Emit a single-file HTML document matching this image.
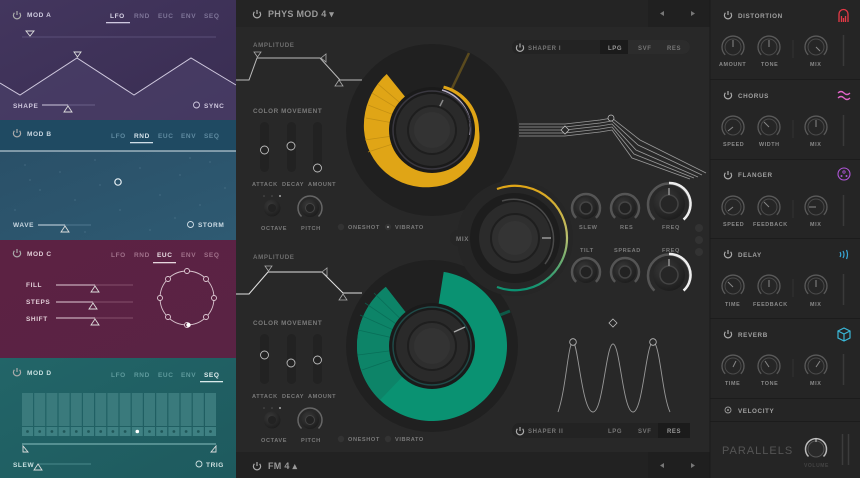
<!DOCTYPE html>
<html><head><meta charset="utf-8"><style>
html,body{margin:0;padding:0;background:#262626;width:860px;height:478px;overflow:hidden}
svg{display:block}
text{font-family:"Liberation Sans",sans-serif;font-weight:bold;letter-spacing:.6px}
</style></head><body>
<svg width="860" height="478" viewBox="0 0 860 478" xmlns="http://www.w3.org/2000/svg">
<defs>
<linearGradient id="ga" x1="0" y1="0" x2="1" y2="1"><stop offset="0" stop-color="#43365e"/><stop offset="1" stop-color="#392d52"/></linearGradient>
<linearGradient id="gb" x1="0" y1="0" x2="1" y2="1"><stop offset="0" stop-color="#2a5068"/><stop offset="1" stop-color="#2e5a72"/></linearGradient>
<linearGradient id="gc" x1="0" y1="0" x2="1" y2="1"><stop offset="0" stop-color="#5c2243"/><stop offset="1" stop-color="#5a2344"/></linearGradient>
<linearGradient id="gd" x1="0" y1="0" x2="1" y2="1"><stop offset="0" stop-color="#226568"/><stop offset="1" stop-color="#1e5a5e"/></linearGradient>
<linearGradient id="mixg" x1="0" y1="0" x2="0" y2="1"><stop offset="0" stop-color="#e0a516"/><stop offset=".5" stop-color="#b8c070"/><stop offset="1" stop-color="#0a9272"/></linearGradient>
<radialGradient id="kn" cx=".4" cy=".35" r=".7"><stop offset="0" stop-color="#3a3a3a"/><stop offset="1" stop-color="#1c1c1c"/></radialGradient>
<g id="fk"><path d="M-7.8,7.8 A11,11 0 1,1 7.8,7.8" fill="none" stroke="#5a5a5a" stroke-width="1.3"/><circle r="8" fill="#262626" stroke="#4a4a4a" stroke-width="1"/></g>
<g id="sk"><path d="M-9.9,9.9 A14,14 0 1,1 9.9,9.9" fill="none" stroke="#555" stroke-width="2.5"/><circle r="11" fill="url(#kn)"/><circle r="6" fill="#222" stroke="#444" stroke-width="1.5"/></g>
<g id="pw"><path d="M-2.6,-2.2 A3.6,3.6 0 1,0 2.6,-2.2" fill="none" stroke="#aaa" stroke-width="1.2"/><line x1="0" y1="-4" x2="0" y2="0" stroke="#aaa" stroke-width="1.2"/></g>
</defs>

<!-- LEFT MOD PANELS -->
<rect x="0" y="0" width="236" height="120" fill="url(#ga)"/>
<rect x="0" y="120" width="236" height="31" fill="#1f4a62"/>
<rect x="0" y="151" width="236" height="89" fill="url(#gb)"/>
<rect x="0" y="240" width="236" height="118" fill="url(#gc)"/>
<rect x="0" y="358" width="236" height="120" fill="url(#gd)"/>

<g font-size="6.5">
<use href="#pw" x="17" y="15"/>
<text x="27" y="17" fill="#d0cce0">MOD A</text>
<text x="110" y="18" fill="#d8d4e6">LFO</text><text x="134" y="18" fill="#7e7598">RND</text><text x="158" y="18" fill="#7e7598">EUC</text><text x="181" y="18" fill="#7e7598">ENV</text><text x="204" y="18" fill="#7e7598">SEQ</text>
<rect x="106" y="22" width="24" height="1.3" fill="#cfc8e0"/>
<line x1="22" y1="37" x2="216" y2="37" stroke="#5a4f78" stroke-width="1"/>
<path d="M26,31 L34,31 L30,36Z" fill="none" stroke="#ddd" stroke-width=".9"/>
<polygon points="0,83 20,95 77,58 134,95 191,58 236,85 236,120 0,120" fill="#4a3f68" opacity=".7"/>
<polyline points="0,83 20,95 77,58 134,95 191,58 236,85" fill="none" stroke="#cfc8de" stroke-width="1"/>
<path d="M74,52 L81,52 L77.5,57Z" fill="none" stroke="#ddd" stroke-width=".9"/>
<text x="13" y="108" fill="#cfc8de">SHAPE</text>
<line x1="42" y1="105" x2="95" y2="105" stroke="#6a6088" stroke-width="1"/><line x1="42" y1="105" x2="68" y2="105" stroke="#cfc8de" stroke-width="1"/>
<path d="M68,106 L72,112 L64,112Z" fill="none" stroke="#ddd" stroke-width=".9"/>
<circle cx="196.5" cy="105" r="3" fill="none" stroke="#cfc8de" stroke-width=".9"/>
<text x="204" y="108" fill="#cfc8de">SYNC</text>

<use href="#pw" x="17" y="133"/>
<text x="27" y="136" fill="#c8d6e0">MOD B</text>
<text x="111" y="138" fill="#5f8aa0">LFO</text><text x="134" y="138" fill="#d4e2ea">RND</text><text x="158" y="138" fill="#5f8aa0">EUC</text><text x="181" y="138" fill="#5f8aa0">ENV</text><text x="204" y="138" fill="#5f8aa0">SEQ</text>
<rect x="130" y="142" width="23" height="1.3" fill="#cfdde6"/>
<line x1="0" y1="151" x2="236" y2="151" stroke="#d8e4ea" stroke-width="1"/>
<g fill="#7fa3b8" opacity=".7">
<circle cx="25" cy="165" r=".5"/><circle cx="60" cy="172" r=".5"/><circle cx="95" cy="160" r=".5"/><circle cx="140" cy="168" r=".5"/><circle cx="180" cy="175" r=".5"/><circle cx="210" cy="162" r=".5"/><circle cx="40" cy="190" r=".5"/><circle cx="75" cy="200" r=".5"/><circle cx="160" cy="195" r=".5"/><circle cx="200" cy="205" r=".5"/><circle cx="120" cy="210" r=".5"/><circle cx="15" cy="210" r=".5"/><circle cx="225" cy="188" r=".5"/><circle cx="100" cy="185" r=".5"/><circle cx="55" cy="225" r=".5"/><circle cx="150" cy="230" r=".5"/><circle cx="190" cy="158" r=".5"/><circle cx="30" cy="180" r=".5"/><circle cx="175" cy="218" r=".5"/><circle cx="85" cy="232" r=".5"/>
</g>
<circle cx="118" cy="182" r="3.2" fill="none" stroke="#e8f0f4" stroke-width="1.2"/>
<text x="13" y="227" fill="#c8d6e0">WAVE</text>
<line x1="38" y1="225" x2="91" y2="225" stroke="#4f7890" stroke-width="1"/><line x1="38" y1="225" x2="65" y2="225" stroke="#cfdde6" stroke-width="1"/>
<path d="M65,226 L69,232 L61,232Z" fill="none" stroke="#ddd" stroke-width=".9"/>
<circle cx="190.5" cy="224.5" r="3" fill="none" stroke="#cfdde6" stroke-width=".9"/>
<text x="198" y="227" fill="#cfdde6">STORM</text>

<use href="#pw" x="17" y="253"/>
<text x="27" y="256" fill="#e0ccd6">MOD C</text>
<text x="111" y="257" fill="#a0708a">LFO</text><text x="134" y="257" fill="#a0708a">RND</text><text x="157" y="257" fill="#ecdfe6">EUC</text><text x="181" y="257" fill="#a0708a">ENV</text><text x="204" y="257" fill="#a0708a">SEQ</text>
<rect x="153" y="262" width="23" height="1.3" fill="#e6d6de"/>
<text x="26" y="287" fill="#e0ccd6">FILL</text><text x="26" y="304" fill="#e0ccd6">STEPS</text><text x="26" y="321" fill="#e0ccd6">SHIFT</text>
<g stroke-width="1">
<line x1="56" y1="285" x2="133" y2="285" stroke="#85506c"/><line x1="56" y1="285" x2="95" y2="285" stroke="#e0ccd6"/>
<line x1="56" y1="302" x2="133" y2="302" stroke="#85506c"/><line x1="56" y1="302" x2="93" y2="302" stroke="#e0ccd6"/>
<line x1="56" y1="318" x2="133" y2="318" stroke="#85506c"/><line x1="56" y1="318" x2="95" y2="318" stroke="#e0ccd6"/>
</g>
<g fill="none" stroke="#ddd" stroke-width=".9"><path d="M95,286 L99,292 L91,292Z"/><path d="M93,303 L97,309 L89,309Z"/><path d="M95,319 L99,325 L91,325Z"/></g>
<circle cx="187" cy="298" r="27" fill="none" stroke="#d8c4ce" stroke-width=".9"/>
<g fill="#5c2243" stroke="#e0ccd6" stroke-width=".9">
<circle cx="187" cy="271" r="2.5"/><circle cx="206" cy="279" r="2.5"/><circle cx="214" cy="298" r="2.5"/><circle cx="206" cy="317" r="2.5"/><circle cx="168" cy="317" r="2.5"/><circle cx="160" cy="298" r="2.5"/><circle cx="168" cy="279" r="2.5"/><circle cx="187" cy="325" r="2.5"/>
</g>
<circle cx="188.5" cy="325" r="2.2" fill="#fff"/>

<use href="#pw" x="17" y="372"/>
<text x="27" y="375" fill="#c8e0e0">MOD D</text>
<text x="111" y="377" fill="#5e9a9c">LFO</text><text x="134" y="377" fill="#5e9a9c">RND</text><text x="158" y="377" fill="#5e9a9c">EUC</text><text x="181" y="377" fill="#5e9a9c">ENV</text><text x="204" y="377" fill="#e0eeee">SEQ</text>
<rect x="200" y="381" width="23" height="1.3" fill="#d8eaea"/>
<g id="cols">
<rect x="22" y="393" width="11" height="33" fill="#3a7a7c"/><rect x="22" y="427" width="11" height="9" fill="#3e8082"/>
</g>
<use href="#cols" x="12.2"/><use href="#cols" x="24.4"/><use href="#cols" x="36.6"/><use href="#cols" x="48.8"/><use href="#cols" x="61"/><use href="#cols" x="73.2"/><use href="#cols" x="85.4"/><use href="#cols" x="97.6"/><use href="#cols" x="109.8"/><use href="#cols" x="122"/><use href="#cols" x="134.2"/><use href="#cols" x="146.4"/><use href="#cols" x="158.6"/><use href="#cols" x="170.8"/><use href="#cols" x="183"/>
<g fill="#1f5658">
<circle cx="27.5" cy="431.5" r="1.4"/><circle cx="39.7" cy="431.5" r="1.4"/><circle cx="51.9" cy="431.5" r="1.4"/><circle cx="64.1" cy="431.5" r="1.4"/><circle cx="76.3" cy="431.5" r="1.4"/><circle cx="88.5" cy="431.5" r="1.4"/><circle cx="100.7" cy="431.5" r="1.4"/><circle cx="112.9" cy="431.5" r="1.4"/><circle cx="125.1" cy="431.5" r="1.4"/><circle cx="149.5" cy="431.5" r="1.4"/><circle cx="161.7" cy="431.5" r="1.4"/><circle cx="173.9" cy="431.5" r="1.4"/><circle cx="186.1" cy="431.5" r="1.4"/><circle cx="198.3" cy="431.5" r="1.4"/><circle cx="210.5" cy="431.5" r="1.4"/>
</g>
<circle cx="137.3" cy="431.5" r="1.8" fill="#fff"/>
<line x1="22" y1="444" x2="216" y2="444" stroke="#8ac0c0" stroke-width=".9"/>
<path d="M23,446 L23,452 L28,452Z" fill="none" stroke="#ddd" stroke-width=".9"/><path d="M216,446 L216,452 L211,452Z" fill="none" stroke="#ddd" stroke-width=".9"/>
<text x="13" y="467" fill="#c8e0e0">SLEW</text>
<line x1="38" y1="464" x2="91" y2="464" stroke="#4a8a8c" stroke-width="1"/>
<path d="M38,464 L42,470 L34,470Z" fill="none" stroke="#ddd" stroke-width=".9"/>
<circle cx="199" cy="464" r="3" fill="none" stroke="#cfe0e0" stroke-width=".9"/>
<text x="206" y="467" fill="#cfe0e0">TRIG</text>
</g>

<!-- MIDDLE -->
<rect x="236" y="0" width="474" height="478" fill="#282828"/>
<rect x="236" y="0" width="474" height="27" fill="#242424"/>
<rect x="648" y="0" width="62" height="27" fill="#202020"/>
<rect x="236" y="452" width="474" height="26" fill="#222"/>
<rect x="648" y="452" width="62" height="26" fill="#1f1f1f"/>
<use href="#pw" x="257" y="14"/>
<text x="268" y="17" font-size="9" fill="#9a9a9a" style="letter-spacing:.3px">PHYS MOD 4 ▾</text>
<text x="268" y="469" font-size="9" fill="#9a9a9a" style="letter-spacing:.3px">FM 4 ▴</text>
<use href="#pw" x="257" y="466"/>
<g fill="#777"><path d="M664,11 L660,13.5 L664,16Z"/><path d="M691,11 L695,13.5 L691,16Z"/><path d="M664,463 L660,465.5 L664,468Z"/><path d="M691,463 L695,465.5 L691,468Z"/></g>

<g font-size="6.2" fill="#6e6e6e">
<text x="253" y="47">AMPLITUDE</text>
<text x="253" y="259">AMPLITUDE</text>
</g>
<polyline points="236,80 249,80 257,58 320,58 340,80 362,80" fill="none" stroke="#bbb" stroke-width="1"/>
<path d="M254,52 L261,52 L257.5,57Z" fill="none" stroke="#aaa" stroke-width=".8"/>
<path d="M321,58 L326,54 L326,62Z" fill="none" stroke="#aaa" stroke-width=".8"/>
<path d="M339,80 L343,86 L335,86Z" fill="none" stroke="#aaa" stroke-width=".8"/>
<polyline points="236,294 249,294 268,272 322,272 343,293 362,293" fill="none" stroke="#e0e0e0" stroke-width="1.1"/>
<path d="M265,266 L272,266 L268.5,271Z" fill="none" stroke="#aaa" stroke-width=".8"/>
<path d="M322,272 L327,268 L327,276Z" fill="none" stroke="#aaa" stroke-width=".8"/>
<path d="M343,294 L347,300 L339,300Z" fill="none" stroke="#aaa" stroke-width=".8"/>

<g id="cm">
<text x="253" y="113" font-size="6.3" fill="#7a7a7a">COLOR  MOVEMENT</text>
<rect x="260" y="122" width="9" height="50" rx="4.5" fill="#222"/>
<rect x="287" y="122" width="9" height="50" rx="4.5" fill="#222"/>
<rect x="313" y="122" width="9" height="50" rx="4.5" fill="#222"/>
<g font-size="5.6" fill="#7a7a7a"><text x="252" y="186">ATTACK</text><text x="282" y="186">DECAY</text><text x="308" y="186">AMOUNT</text>
<text x="261" y="230">OCTAVE</text><text x="301" y="230">PITCH</text><text x="348" y="229">ONESHOT</text><text x="395" y="229">VIBRATO</text></g>
<circle cx="264" cy="196" r=".8" fill="#555"/><circle cx="272" cy="196" r=".8" fill="#555"/><circle cx="280" cy="196" r="1" fill="#aaa"/>
<circle cx="272" cy="208" r="8.5" fill="url(#kn)"/><circle cx="272" cy="208" r="4" fill="#222"/>
<path d="M301.5,216.5 A12,12 0 1,1 318.5,216.5" fill="none" stroke="#666" stroke-width="1.5"/>
<circle cx="310" cy="208" r="9" fill="url(#kn)"/><circle cx="310" cy="208" r="4.5" fill="#222" stroke="#444"/>
<circle cx="341" cy="227" r="3.2" fill="#333"/><circle cx="388" cy="227" r="3.2" fill="#333"/>
</g>
<circle cx="264.5" cy="150" r="4" fill="none" stroke="#bbb" stroke-width=".9"/>
<circle cx="291" cy="146" r="4" fill="none" stroke="#bbb" stroke-width=".9"/>
<circle cx="317.5" cy="168" r="4" fill="none" stroke="#bbb" stroke-width=".9"/>
<circle cx="388" cy="227" r=".9" fill="#bbb"/>
<use href="#cm" y="212"/>
<circle cx="264.5" cy="355" r="4" fill="none" stroke="#bbb" stroke-width=".9"/>
<circle cx="291" cy="363" r="4" fill="none" stroke="#bbb" stroke-width=".9"/>
<circle cx="317.5" cy="360" r="4" fill="none" stroke="#bbb" stroke-width=".9"/>

<!-- Upper osc -->
<circle cx="432" cy="130" r="86" fill="#202020"/>
<line x1="432" y1="130" x2="469" y2="53" stroke="#5a4a1e" stroke-width="2.5"/>
<path d="M432,130 L443.9,85.6 A46,46 0 0,1 479,130 A50,50 0 0,1 432,187 A62,62 0 0,1 364,130 A70,70 0 0,1 386.7,74 Z" fill="#e0a516"/>
<g stroke="#c08d12" stroke-width=".8" opacity=".9">
<line x1="420" y1="128" x2="366" y2="118"/><line x1="420" y1="125" x2="368" y2="105"/><line x1="420" y1="122" x2="372" y2="93"/><line x1="420" y1="120" x2="378" y2="84"/><line x1="420" y1="132" x2="365" y2="140"/><line x1="420" y1="135" x2="368" y2="152"/>
</g>
<circle cx="432" cy="130" r="43" fill="#1a1a1a"/>
<path d="M442,90 A40,40 0 0,1 470,135" fill="none" stroke="#b8b0c8" stroke-width="1.5"/>
<circle cx="432" cy="130" r="39" fill="none" stroke="#3a3840" stroke-width="1.5"/>
<circle cx="432" cy="130" r="36" fill="#2a2a2a"/>
<line x1="443" y1="100" x2="438" y2="110" stroke="#888" stroke-width="1.5"/>
<circle cx="432" cy="130" r="24" fill="#2e2e2e" stroke="#1e1e1e" stroke-width="2"/>
<circle cx="432" cy="130" r="18" fill="#333"/>

<!-- Lower osc -->
<circle cx="432" cy="346" r="86" fill="#202020"/>
<path d="M432,346 L443.7,271.9 A75,75 0 1,1 385.8,286.9 Z" fill="#0a9272"/>
<path d="M432,346 L385.8,286.9 A75,75 0 0,0 357,346 A75,75 0 0,0 380,400 Z" fill="#0d8468"/>
<g stroke="#086a55" stroke-width=".8" opacity=".8">
<line x1="420" y1="344" x2="358" y2="330"/><line x1="420" y1="342" x2="360" y2="315"/><line x1="420" y1="340" x2="365" y2="303"/><line x1="420" y1="338" x2="374" y2="293"/><line x1="420" y1="347" x2="358" y2="355"/><line x1="420" y1="350" x2="362" y2="370"/>
</g>
<line x1="500" y1="315" x2="510" y2="311" stroke="#0d5a48" stroke-width="3"/>
<circle cx="432" cy="346" r="43" fill="#1a1a1a"/>
<circle cx="432" cy="346" r="39" fill="none" stroke="#1f4a48" stroke-width="1.5"/>
<circle cx="432" cy="346" r="36" fill="#2a2a2a"/>
<line x1="454" y1="332" x2="465" y2="327" stroke="#aaa" stroke-width="1.5"/>
<circle cx="432" cy="346" r="24" fill="#2e2e2e" stroke="#1e1e1e" stroke-width="2"/>
<circle cx="432" cy="346" r="18" fill="#333"/>

<!-- MIX -->
<circle cx="515" cy="238" r="58" fill="#262626"/>
<rect x="450" y="230" width="30" height="16" rx="8" fill="#262626"/>
<text x="456" y="241" font-size="6.3" fill="#7a7a7a">MIX</text>
<path d="M497,189 A52,52 0 0,1 567,238 A52,52 0 0,1 497,287" fill="none" stroke="url(#mixg)" stroke-width="2.2"/>
<circle cx="515" cy="238" r="45" fill="#1d1d1d"/>
<path d="M502,201 A40,40 0 0,1 545,264" fill="none" stroke="#4a4a4a" stroke-width="1.5"/>
<circle cx="515" cy="238" r="36" fill="#2b2b2b"/>
<line x1="542" y1="238" x2="551" y2="238" stroke="#999" stroke-width="1.5"/>
<circle cx="515" cy="238" r="24" fill="#2f2f2f" stroke="#1e1e1e" stroke-width="2"/>
<circle cx="515" cy="238" r="17" fill="#343434"/>

<!-- Shapers -->
<rect x="512" y="40" width="178" height="14" rx="7" fill="#232323"/>
<rect x="600" y="40" width="28" height="14" fill="#1b1b1b"/>
<rect x="628" y="40" width="55" height="14" fill="#2c2c2c"/>
<path d="M683,40 A7,7 0 0,1 683,54 Z" fill="#2c2c2c"/>
<use href="#pw" x="520" y="47.5"/>
<g font-size="6" fill="#777"><text x="528" y="50">SHAPER I</text><text x="608" y="50" fill="#999">LPG</text><text x="638" y="50">SVF</text><text x="667" y="50">RES</text></g>
<rect x="512" y="423" width="178" height="15" rx="7.5" fill="#232323"/>
<rect x="658" y="423" width="32" height="15" fill="#1b1b1b"/>
<use href="#pw" x="520" y="431"/>
<g font-size="6" fill="#777"><text x="528" y="433">SHAPER II</text><text x="608" y="433">LPG</text><text x="638" y="433">SVF</text><text x="667" y="433" fill="#999">RES</text></g>

<g fill="none" stroke="#9a9a9a" stroke-width=".8">
<path d="M519,124 L565,124 L600,120 L612,118 L640,140 L706,173"/>
<path d="M519,127 L565,127 L600,123 L612,121 L638,145 L702,175"/>
<path d="M519,130 L565,130 L600,126 L612,124 L636,150 L698,177"/>
<path d="M519,133 L565,133 L600,129 L612,127 L634,154 L694,178"/>
<path d="M519,136 L565,136 L600,132 L612,130 L632,158 L690,179"/>
</g>
<path d="M565,126 L569,130 L565,134 L561,130Z" fill="#282828" stroke="#bbb" stroke-width=".8"/>
<circle cx="611" cy="118" r="3" fill="#282828" stroke="#bbb" stroke-width=".8"/>

<g fill="none" stroke="#999" stroke-width=".9">
<path d="M558,412 C566,390 568,342 573,342 C578,342 582,412 593,412 C603,412 606,344 613,344 C620,344 623,412 633,412 C643,412 646,342 653,342 C660,342 662,395 670,412"/>
</g>
<circle cx="573" cy="342" r="3.3" fill="#282828" stroke="#bbb" stroke-width=".8"/>
<circle cx="653" cy="342" r="3.3" fill="#282828" stroke="#bbb" stroke-width=".8"/>
<path d="M613,319 L617,323 L613,327 L609,323Z" fill="none" stroke="#bbb" stroke-width=".8"/>

<use href="#sk" x="586" y="208"/><use href="#sk" x="625" y="208"/>
<use href="#sk" x="586" y="272"/><use href="#sk" x="625" y="272"/>
<g>
<path d="M654.4,219.6 A21,21 0 1,1 683.6,219.6" fill="none" stroke="#555" stroke-width="2.5"/>
<path d="M669,183 A21,21 0 0,1 683.6,219.6" fill="none" stroke="#eee" stroke-width="2.5"/>
<circle cx="669" cy="204" r="16" fill="url(#kn)"/><circle cx="669" cy="204" r="9" fill="#262626" stroke="#444" stroke-width="1.5"/>
<line x1="669" y1="188" x2="669" y2="195" stroke="#aaa" stroke-width="1.2"/>
</g>
<g>
<path d="M654.4,290.6 A21,21 0 1,1 683.6,290.6" fill="none" stroke="#555" stroke-width="2.5"/>
<path d="M669,254 A21,21 0 0,1 683.6,290.6" fill="none" stroke="#eee" stroke-width="2.5"/>
<circle cx="669" cy="275" r="16" fill="url(#kn)"/><circle cx="669" cy="275" r="9" fill="#262626" stroke="#444" stroke-width="1.5"/>
<line x1="669" y1="259" x2="669" y2="266" stroke="#aaa" stroke-width="1.2"/>
</g>
<g font-size="5.6" fill="#7a7a7a"><text x="579" y="229">SLEW</text><text x="620" y="229">RES</text><text x="662" y="229">FREQ</text>
<text x="580" y="252">TILT</text><text x="614" y="252">SPREAD</text><text x="662" y="252">FREQ</text></g>
<circle cx="699" cy="228" r="4" fill="#333"/><circle cx="699" cy="240" r="4" fill="#333"/><circle cx="699" cy="252" r="4" fill="#333"/>

<!-- RIGHT FX PANEL -->
<rect x="710" y="0" width="150" height="478" fill="#252525"/>
<g stroke="#1c1c1c" stroke-width="1"><line x1="710" y1="79.5" x2="860" y2="79.5"/><line x1="710" y1="159.5" x2="860" y2="159.5"/><line x1="710" y1="238.5" x2="860" y2="238.5"/><line x1="710" y1="318.5" x2="860" y2="318.5"/><line x1="710" y1="398.5" x2="860" y2="398.5"/><line x1="710" y1="421.5" x2="860" y2="421.5"/></g>
<line x1="710" y1="0" x2="710" y2="478" stroke="#1a1a1a"/>
<g id="fx">
<use href="#pw" x="728" y="15"/>
<use href="#fk" x="733" y="47"/><use href="#fk" x="769" y="47"/><use href="#fk" x="816" y="47"/>
<line x1="793" y1="40" x2="793" y2="58" stroke="#333"/>
<line x1="843.5" y1="35" x2="843.5" y2="66" stroke="#3a3a3a" stroke-width="1.5"/>
</g>
<use href="#fx" y="80"/><use href="#fx" y="160"/><use href="#fx" y="239"/><use href="#fx" y="319"/>
<g font-size="6.3" fill="#a0a0a0">
<text x="738" y="18">DISTORTION</text><text x="738" y="98">CHORUS</text><text x="738" y="177">FLANGER</text><text x="738" y="257">DELAY</text><text x="738" y="337">REVERB</text><text x="738" y="413">VELOCITY</text>
</g>
<g font-size="5.4" fill="#8a8a8a">
<text x="719" y="66">AMOUNT</text><text x="761" y="66">TONE</text><text x="810" y="66">MIX</text>
<text x="723" y="146">SPEED</text><text x="759" y="146">WIDTH</text><text x="810" y="146">MIX</text>
<text x="723" y="226">SPEED</text><text x="753" y="226">FEEDBACK</text><text x="810" y="226">MIX</text>
<text x="725" y="306">TIME</text><text x="753" y="306">FEEDBACK</text><text x="810" y="306">MIX</text>
<text x="725" y="385">TIME</text><text x="761" y="385">TONE</text><text x="810" y="385">MIX</text>
</g>
<g stroke="#888" stroke-width="1"><line x1="733" y1="47" x2="733" y2="40"/><line x1="769" y1="47" x2="769" y2="40"/><line x1="816" y1="47" x2="820" y2="51"/>
<line x1="733" y1="127" x2="728" y2="131"/><line x1="769" y1="127" x2="764" y2="122"/><line x1="816" y1="127" x2="816" y2="120"/>
<line x1="733" y1="207" x2="728" y2="211"/><line x1="769" y1="207" x2="764" y2="202"/><line x1="816" y1="207" x2="809" y2="207"/>
<line x1="733" y1="287" x2="728" y2="282"/><line x1="769" y1="287" x2="769" y2="280"/><line x1="816" y1="287" x2="816" y2="280"/>
<line x1="733" y1="367" x2="736" y2="361"/><line x1="769" y1="367" x2="765" y2="361"/><line x1="816" y1="367" x2="820" y2="361"/></g>
<path d="M839,22 L839,14 A4.5,4.5 0 0,1 848,14 L848,22 M841.5,22 L841.5,16 M845.5,22 L845.5,16 M843.5,22 L843.5,18" fill="none" stroke="#e63946" stroke-width="1.3"/>
<path d="M838,93 Q841,90 844,93 T850,93 M838,98 Q841,95 844,98 T850,98" fill="none" stroke="#e064c8" stroke-width="1.3"/>
<circle cx="844" cy="174" r="6" fill="none" stroke="#b056d8" stroke-width="1.1"/><circle cx="844" cy="172" r="1.2" fill="none" stroke="#b056d8" stroke-width=".8"/><circle cx="841.5" cy="176" r="1" fill="#b056d8"/><circle cx="846.5" cy="176" r="1" fill="#b056d8"/>
<path d="M840,252 Q841.5,254.5 840,257 M843,251 Q845,254.5 843,258 M846.5,250 Q848.5,254.5 846.5,259" fill="none" stroke="#38a8d8" stroke-width="1.2"/>
<path d="M844,328 L850,331 L850,338 L844,341 L838,338 L838,331Z M838,331 L844,334 L850,331 M844,334 L844,341" fill="none" stroke="#3ab8d8" stroke-width="1.2"/>
<circle cx="728" cy="410" r="3" fill="none" stroke="#999" stroke-width=".9"/><circle cx="728" cy="410" r="1" fill="#999"/>
<text x="722" y="454" font-size="11" fill="#555" style="font-weight:normal;letter-spacing:1px">PARALLELS</text>
<path d="M808.5,456.5 A10.5,10.5 0 1,1 823.5,456.5" fill="none" stroke="#bbb" stroke-width="1.5"/>
<circle cx="816" cy="449" r="8" fill="#2a2a2a" stroke="#555"/>
<line x1="816" y1="442" x2="816" y2="438" stroke="#ccc" stroke-width="1"/>
<text x="804" y="467" font-size="5" fill="#444">VOLUME</text>
<line x1="842.5" y1="434" x2="842.5" y2="465" stroke="#3c3c3c" stroke-width="1.5"/>
<line x1="848.5" y1="434" x2="848.5" y2="465" stroke="#3c3c3c" stroke-width="1.5"/>
</svg>
</body></html>
